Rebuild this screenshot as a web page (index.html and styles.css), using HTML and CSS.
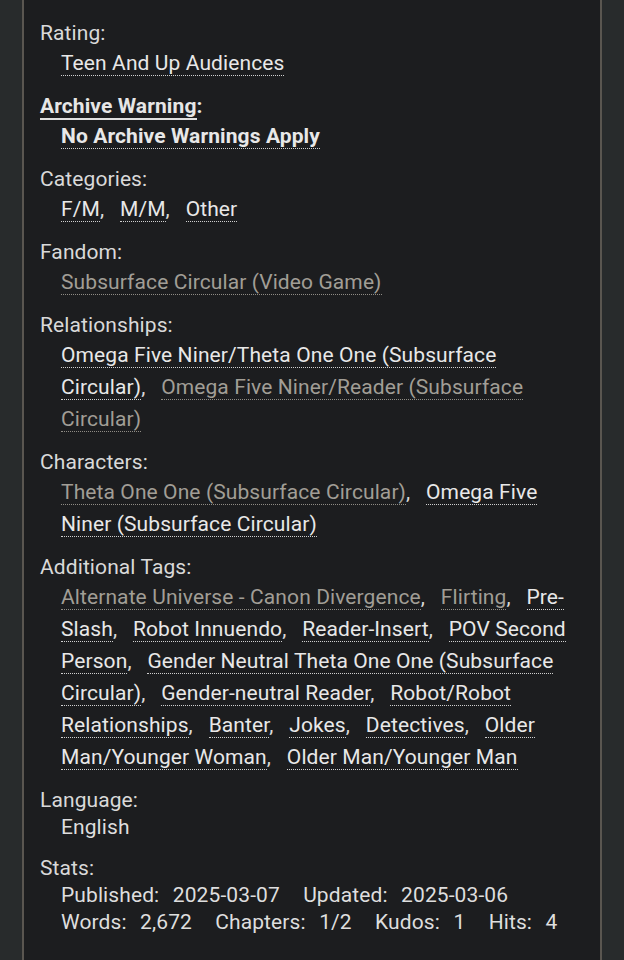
FILE: index.html
```html
<!DOCTYPE html>
<html lang="en">
<head>
<meta charset="utf-8">
<title>Work meta</title>
<link rel="stylesheet" href="styles.css">
</head>
<body>
<div class="page">
  <div class="panel">
    <dl class="meta">
      <dt>Rating:</dt>
      <dd><ul class="tags"><li><a class="tag">Teen And Up Audiences</a></li></ul></dd>

      <dt class="strong"><a class="help">Archive Warning</a>:</dt>
      <dd><ul class="tags"><li><a class="tag bold">No Archive Warnings Apply</a></li></ul></dd>

      <dt>Categories:</dt>
      <dd><ul class="tags commas"><li><a class="tag">F/M</a>,</li> <li><a class="tag">M/M</a>,</li> <li><a class="tag">Other</a></li></ul></dd>

      <dt>Fandom:</dt>
      <dd><ul class="tags"><li><a class="tag visited">Subsurface Circular (Video Game)</a></li></ul></dd>

      <dt>Relationships:</dt>
      <dd><ul class="tags commas"><li><a class="tag">Omega Five Niner/Theta One One (Subsurface Circular)</a>,</li> <li><a class="tag visited">Omega Five Niner/Reader (Subsurface Circular)</a></li></ul></dd>

      <dt>Characters:</dt>
      <dd><ul class="tags commas"><li><a class="tag visited">Theta One One (Subsurface Circular)</a>,</li> <li><a class="tag">Omega Five Niner (Subsurface Circular)</a></li></ul></dd>

      <dt>Additional Tags:</dt>
      <dd><ul class="tags commas"><li><a class="tag visited">Alternate Universe - Canon Divergence</a>,</li> <li><a class="tag visited">Flirting</a>,</li> <li><a class="tag">Pre-Slash</a>,</li> <li><a class="tag">Robot Innuendo</a>,</li> <li><a class="tag">Reader-Insert</a>,</li> <li><a class="tag">POV Second Person</a>,</li> <li><a class="tag">Gender Neutral Theta One One (Subsurface Circular)</a>,</li> <li><a class="tag">Gender-neutral Reader</a>,</li> <li><a class="tag">Robot/Robot Relationships</a>,</li> <li><a class="tag">Banter</a>,</li> <li><a class="tag">Jokes</a>,</li> <li><a class="tag">Detectives</a>,</li> <li><a class="tag">Older Man/Younger Woman</a>,</li> <li><a class="tag">Older Man/Younger Man</a></li></ul></dd>

      <dt>Language:</dt>
      <dd class="plain">English</dd>

      <dt>Stats:</dt>
      <dd class="plain">
        <dl class="stats"><dt>Published:</dt><dd>2025-03-07</dd> <dt>Updated:</dt><dd>2025-03-06</dd> <dt>Words:</dt><dd>2,672</dd> <dt>Chapters:</dt><dd>1/2</dd> <dt>Kudos:</dt><dd>1</dd> <dt>Hits:</dt><dd>4</dd></dl>
      </dd>
    </dl>
  </div>
</div>
</body>
</html>
```

FILE: styles.css
```css
html, body {
  margin: 0;
  padding: 0;
  background: #282b2c;
}

body {
  font-family: Roboto, "Liberation Sans", sans-serif;
  font-size: 21px;
  letter-spacing: 0.1px;
  color: #d9d9d9;
}

.page {
  padding: 0 22px;
}

.panel {
  background: #1c1d1f;
  border-left: 2px solid #5a5650;
  border-right: 2px solid #5a5650;
  padding: 20px 16px 60px 16px;
  min-height: 900px;
}

.meta {
  margin: 0;
}

.meta > dt {
  line-height: 27px;
  color: #d9d9d9;
}

.meta > dt.strong {
  font-weight: bold;
  color: #e6e6e6;
}

.help {
  border-bottom: 2px solid #e0e0e0;
}

.meta > dd {
  margin: 0 0 14px 21px;
}

.meta > dd.plain {
  line-height: 27px;
  color: #dedede;
}

.tags {
  list-style: none;
  margin: 0;
  padding: 0;
  line-height: 32px;
}

.tags li {
  display: inline;
  margin-right: 10.5px;
}

.tag {
  color: #e8e8e8;
  border-bottom: 1px dotted #d0d0d0;
}

.tag.visited {
  color: #a19e96;
  border-bottom-color: #8f8c85;
}

.tag.bold {
  font-weight: bold;
}

.stats {
  margin: 0;
}

.stats dt,
.stats dd {
  display: inline;
  margin: 0;
}

.stats dd {
  margin-left: 13.5px;
  margin-right: 18px;
}
```
